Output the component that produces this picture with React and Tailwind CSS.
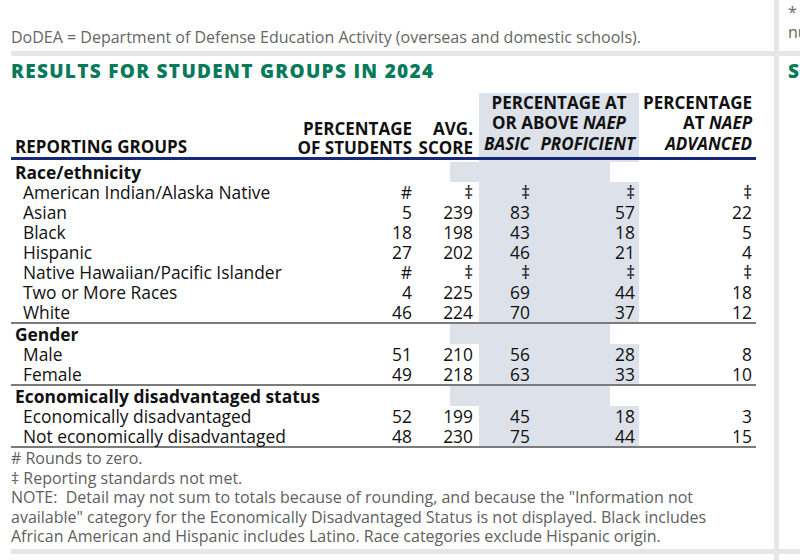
import React from "react";

const rowsData = [
  { g: "Race/ethnicity" },
  { l: "American Indian/Alaska Native", v: ["#", "‡", "‡", "‡", "‡"] },
  { l: "Asian", v: ["5", "239", "83", "57", "22"] },
  { l: "Black", v: ["18", "198", "43", "18", "5"] },
  { l: "Hispanic", v: ["27", "202", "46", "21", "4"] },
  { l: "Native Hawaiian/Pacific Islander", v: ["#", "‡", "‡", "‡", "‡"] },
  { l: "Two or More Races", v: ["4", "225", "69", "44", "18"] },
  { l: "White", v: ["46", "224", "70", "37", "12"] },
  { sep: true },
  { g: "Gender" },
  { l: "Male", v: ["51", "210", "56", "28", "8"] },
  { l: "Female", v: ["49", "218", "63", "33", "10"] },
  { sep: true },
  { g: "Economically disadvantaged status" },
  { l: "Economically disadvantaged", v: ["52", "199", "45", "18", "3"] },
  { l: "Not economically disadvantaged", v: ["48", "230", "75", "44", "15"] },
  { sep: true },
];

function Row({ r }) {
  if (r.sep) return <div className="h-[2px] bg-[#7b7b7b]" />;
  if (r.g)
    return (
      <div className="flex h-[20px] leading-[20px]">
        <div className="w-[376px] pl-[4px] font-bold whitespace-nowrap">{r.g}</div>
        <div className="w-[63px]" />
        <div className="w-[160px] bg-[#dde1ea]" />
        <div className="w-[117px]" />
      </div>
    );
  return (
    <div className="flex h-[20px] leading-[20px]">
      <div className="w-[260px] pl-[12px] whitespace-nowrap">{r.l}</div>
      <div className="w-[145px] pr-[4px] text-right">{r.v[0]}</div>
      <div className="w-[63px] pr-[6px] text-right">{r.v[1]}</div>
      <div className="flex w-[160px] bg-[#dde1ea]">
        <div className="w-[55px] pr-[4px] text-right">{r.v[2]}</div>
        <div className="w-[105px] pr-[4px] text-right">{r.v[3]}</div>
      </div>
      <div className="w-[117px] pr-[4px] text-right">{r.v[4]}</div>
    </div>
  );
}

export default function App() {
  return (
    <div className="w-[800px] h-[560px] overflow-hidden bg-white font-['Open_Sans',sans-serif] text-[#111]">
      {/* top row */}
      <div className="flex h-[51px]">
        <div className="w-[11px]" />
        <div className="w-[763px] flex items-end pb-[4px] text-[16px] leading-[20px] text-[#666] whitespace-nowrap">
          DoDEA = Department of Defense Education Activity (overseas and domestic schools).
        </div>
        <div className="w-[5px] bg-[#e6e6e8]" />
        <div className="flex-1 overflow-hidden pt-[2px] pl-[9px] text-[16px] leading-[20px] text-[#666] whitespace-nowrap">
          <div>* Significantly</div>
          <div>number</div>
        </div>
      </div>
      <div className="flex h-[5px]">
        <div className="w-[11px]" />
        <div className="flex-1 bg-[#e6e6e8]" />
      </div>
      {/* main row */}
      <div className="flex h-[493px]">
        <div className="w-[11px]" />
        <div className="w-[763px] flex flex-col">
          <div className="pt-[3px] text-[19px] leading-[24px] font-extrabold tracking-[1.3px] text-[#077a5c] whitespace-nowrap">
            RESULTS FOR STUDENT GROUPS IN 2024
          </div>
          <div className="mt-[10px] w-[745px] text-[17.4px]">
            {/* header */}
            <div className="flex h-[64px] text-[17px] font-bold leading-[20px] whitespace-nowrap">
              <div className="w-[260px] pl-[4px] flex flex-col justify-end">
                <div>REPORTING GROUPS</div>
              </div>
              <div className="w-[145px] pr-[4px] flex flex-col justify-end items-end leading-[19px]">
                <div>PERCENTAGE</div>
                <div>OF STUDENTS</div>
              </div>
              <div className="w-[63px] pr-[6px] flex flex-col justify-end items-end leading-[19px]">
                <div>AVG.</div>
                <div>SCORE</div>
              </div>
              <div className="w-[160px] bg-[#dde1ea] flex flex-col">
                <div className="text-center h-[20px]">PERCENTAGE AT</div>
                <div className="text-center h-[20px]">
                  OR ABOVE <i>NAEP</i>
                </div>
                <div className="flex pt-[1px] italic">
                  <div className="w-[55px] pr-[4px] text-right">BASIC</div>
                  <div className="w-[105px] pr-[4px] text-right">PROFICIENT</div>
                </div>
              </div>
              <div className="w-[117px] pr-[4px] flex flex-col items-end">
                <div className="h-[20px]">PERCENTAGE</div>
                <div className="h-[20px]">
                  AT <i>NAEP</i>
                </div>
                <div className="pt-[1px] italic">ADVANCED</div>
              </div>
            </div>
            <div className="h-[3px] bg-[#16287a]" />
            <div className="flex h-[2px]">
              <div className="w-[468px]" />
              <div className="w-[160px] bg-[#dde1ea]" />
            </div>
            {rowsData.map((r, i) => (
              <Row key={i} r={r} />
            ))}
          </div>
          <div className="mt-[1px] text-[16px] leading-[19.5px] text-[#606060] whitespace-pre">
            <div># Rounds to zero.</div>
            <div>‡ Reporting standards not met.</div>
            <div>NOTE:  Detail may not sum to totals because of rounding, and because the "Information not</div>
            <div>available" category for the Economically Disadvantaged Status is not displayed. Black includes</div>
            <div>African American and Hispanic includes Latino. Race categories exclude Hispanic origin.</div>
          </div>
        </div>
        <div className="w-[5px] bg-[#e6e6e8]" />
        <div className="flex-1 overflow-hidden pl-[9px] pt-[3px] text-[19px] leading-[24px] font-extrabold tracking-[1.3px] text-[#077a5c] whitespace-nowrap">
          SCORE GAPS
        </div>
      </div>
      <div className="flex h-[5px]">
        <div className="w-[11px]" />
        <div className="flex-1 bg-[#e6e6e8]" />
      </div>
      <div className="flex h-[6px]">
        <div className="w-[774px]" />
        <div className="w-[5px] bg-[#e6e6e8]" />
      </div>
    </div>
  );
}
